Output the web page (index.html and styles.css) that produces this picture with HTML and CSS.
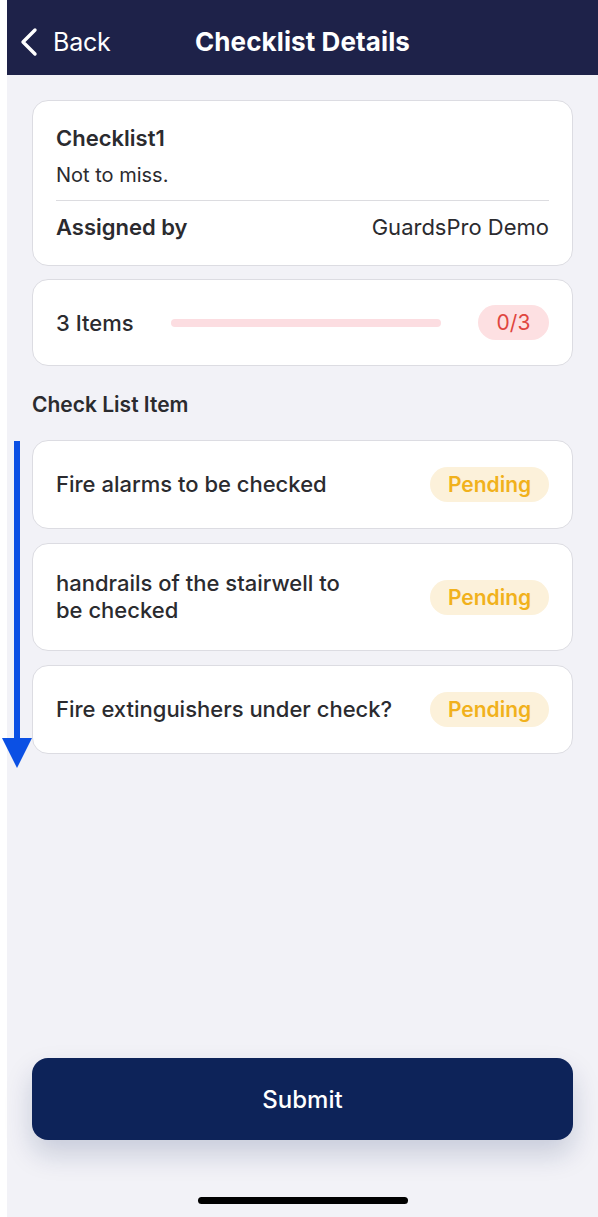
FILE: index.html
```html
<!DOCTYPE html>
<html lang="en">
<head>
  <meta charset="UTF-8">
  <meta name="viewport" content="width=device-width, initial-scale=1.0">
  <title>Checklist Details</title>
  <link rel="stylesheet" href="styles.css">
</head>
<body>
  <div class="screen">
    <!-- Top navigation bar -->
    <header class="nav">
      <div class="back">
        <svg class="chevron" width="20" height="30" viewBox="0 0 20 30">
          <path d="M16 3 L4 15 L16 27" fill="none" stroke="#fff" stroke-width="3.4" stroke-linecap="round" stroke-linejoin="round"/>
        </svg>
        <span>Back</span>
      </div>
      <h1 class="nav-title">Checklist Details</h1>
    </header>

    <main class="content">
      <!-- Summary card -->
      <section class="card info">
        <div class="info-name">Checklist1</div>
        <div class="info-desc">Not to miss.</div>
        <div class="info-row">
          <span class="info-label">Assigned by</span>
          <span class="info-value">GuardsPro Demo</span>
        </div>
      </section>

      <!-- Progress card -->
      <section class="card progress">
        <span class="progress-count">3 Items</span>
        <div class="progress-track"><div class="progress-fill" style="width: 0%"></div></div>
        <span class="badge badge-red">0/3</span>
      </section>

      <h2 class="section-title">Check List Item</h2>

      <ul class="items">
        <li class="card item">
          <span class="item-text">Fire alarms to be checked</span>
          <span class="badge badge-pending">Pending</span>
        </li>
        <li class="card item">
          <span class="item-text">handrails of the stairwell to<br>be checked</span>
          <span class="badge badge-pending">Pending</span>
        </li>
        <li class="card item">
          <span class="item-text">Fire extinguishers under check?</span>
          <span class="badge badge-pending">Pending</span>
        </li>
      </ul>
    </main>

    <footer class="footer">
      <button class="submit">Submit</button>
      <div class="home-bar"></div>
    </footer>
  </div>

  <!-- Scroll hint arrow drawn over the list -->
  <svg class="scroll-arrow" width="30" height="328" viewBox="0 0 30 328">
    <rect x="12" y="0" width="6" height="300" fill="#0b50e4"/>
    <path d="M0 297 L30 297 L15 327 Z" fill="#0b50e4"/>
  </svg>
</body>
</html>
```

FILE: styles.css
```css
/* Base */
body {
  margin: 0;
  background: #fff;
  font-family: Inter, "Noto Sans", Arial, sans-serif;
  color: #2b2b2f;
}
.screen {
  margin-left: 7px;
  min-height: 1217px;
  background: #f2f2f7;
  display: flex;
  flex-direction: column;
}

/* Navigation bar */
.nav {
  height: 75px;
  background: #1e2249;
  display: flex;
  align-items: center;
  justify-content: center;
  position: relative;
  padding-top: 7px;
  box-sizing: border-box;
}
.back {
  position: absolute;
  left: 12px;
  top: 27px;
  display: flex;
  align-items: center;
  gap: 14px;
  color: #fff;
  font-size: 25px;
  letter-spacing: -0.2px;
}
.chevron {
  display: block;
}
.nav-title {
  margin: 0;
  color: #fff;
  font-size: 26px;
  font-weight: 700;
  letter-spacing: 0.1px;
}

/* Content */
.content {
  padding: 25px 25px 0;
}
.card {
  background: #fff;
  border: 1px solid #dcdce2;
  border-radius: 16px;
}
.info {
  padding: 24px 23px 25px;
}
.info-name {
  font-size: 22px;
  font-weight: 600;
  line-height: 26px;
}
.info-desc {
  font-size: 20px;
  line-height: 24px;
  margin-top: 12px;
  padding-bottom: 13px;
  border-bottom: 1px solid #dcdce0;
}
.info-row {
  display: flex;
  justify-content: space-between;
  align-items: center;
  margin-top: 13px;
  line-height: 26px;
}
.info-label {
  font-size: 22px;
  font-weight: 600;
}
.info-value {
  font-size: 22px;
}

.progress {
  margin-top: 13px;
  height: 87px;
  box-sizing: border-box;
  padding: 0 23px;
  display: flex;
  align-items: center;
}
.progress-count {
  font-size: 22px;
  font-weight: 500;
}
.progress-track {
  flex: 1;
  height: 8px;
  margin: 0 37px;
  border-radius: 4px;
  background: #fcdde1;
}
.progress-fill {
  height: 100%;
  border-radius: 4px;
  background: #e0463f;
}

.badge {
  height: 35px;
  border-radius: 18px;
  display: inline-flex;
  align-items: center;
  justify-content: center;
  font-size: 21px;
  flex-shrink: 0;
}
.badge-red {
  width: 71px;
  background: #fde0e2;
  color: #e0463f;
}
.badge-pending {
  width: 119px;
  background: #fcf1da;
  color: #f1b11c;
  font-weight: 600;
}

.section-title {
  margin: 26px 0 0;
  font-size: 21px;
  font-weight: 600;
  line-height: 26px;
}

.items {
  list-style: none;
  margin: 22px 0 0;
  padding: 0;
  display: flex;
  flex-direction: column;
  gap: 14px;
}
.item {
  display: flex;
  align-items: center;
  justify-content: space-between;
  padding: 26px 23px;
}
.item-text {
  font-size: 22px;
  font-weight: 500;
  line-height: 27px;
}

/* Footer */
.footer {
  margin-top: auto;
  padding: 0 25px 13px;
  display: flex;
  flex-direction: column;
  align-items: center;
}
.submit {
  width: 100%;
  height: 82px;
  border: none;
  border-radius: 16px;
  background: #0d2359;
  color: #fff;
  font-family: inherit;
  font-size: 24px;
  font-weight: 500;
  box-shadow: 0 14px 28px rgba(13, 35, 89, 0.18);
}
.home-bar {
  width: 210px;
  height: 7px;
  margin-top: 57px;
  border-radius: 4px;
  background: #000;
}

/* Annotation overlay */
.scroll-arrow {
  position: absolute;
  left: 2px;
  top: 441px;
}
```
